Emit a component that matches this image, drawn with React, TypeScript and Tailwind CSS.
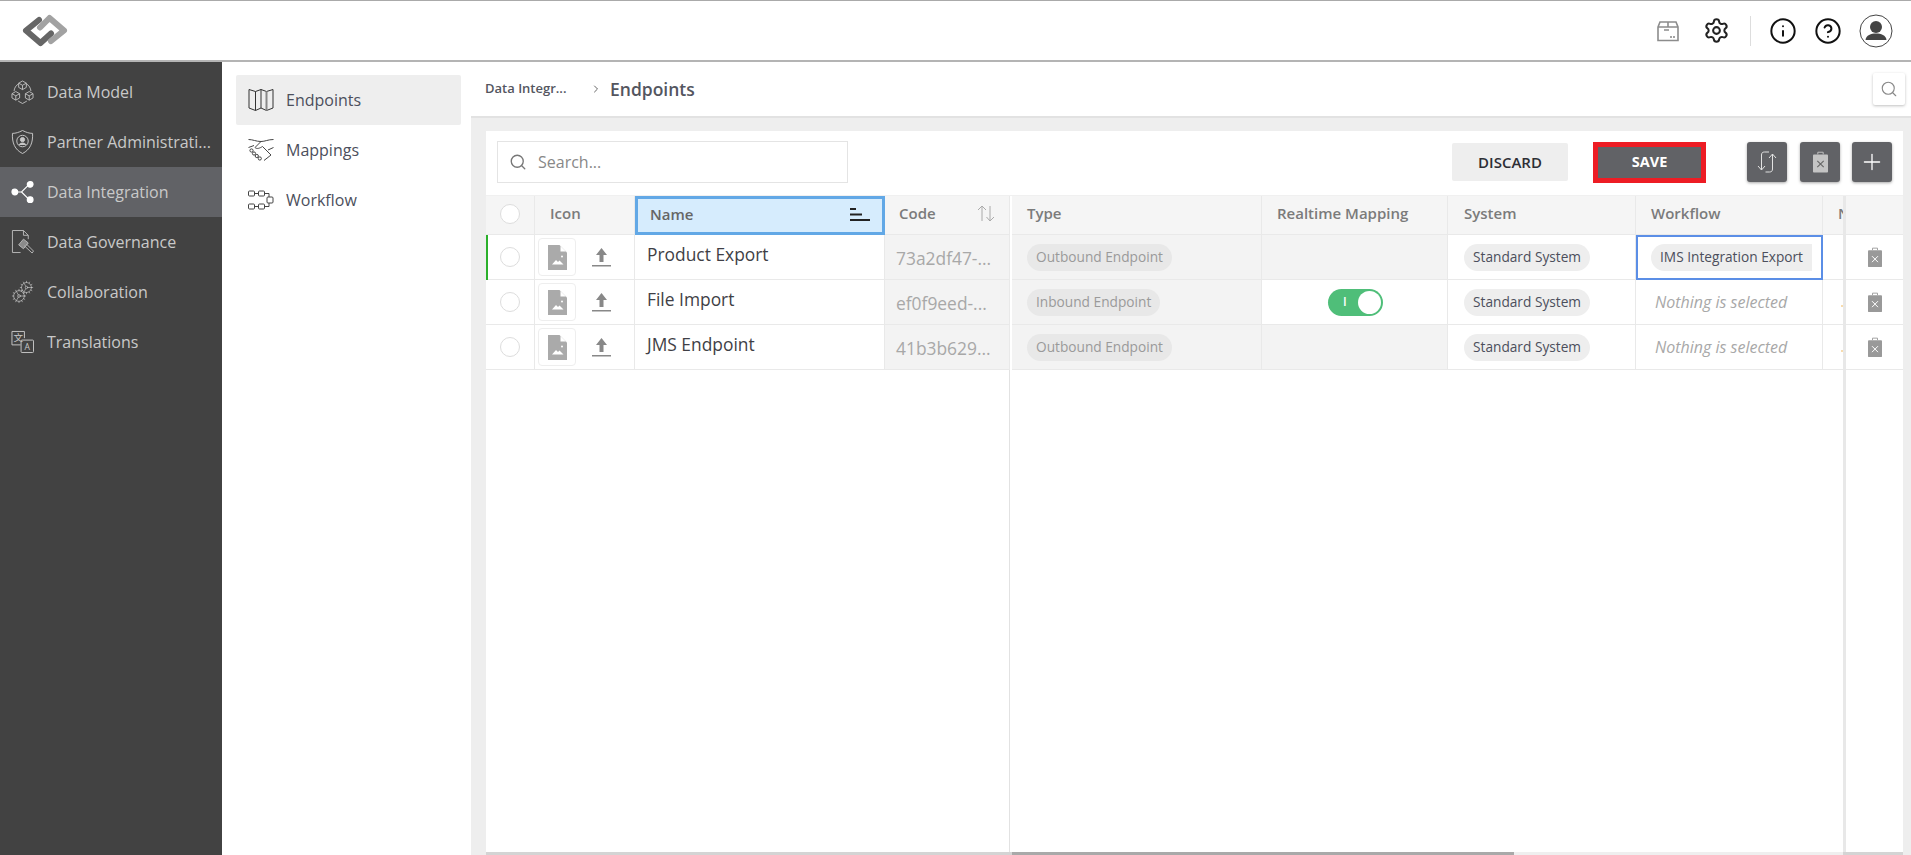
import { ReactNode } from "react"
import { Cog, Info, CircleHelp, Search, Settings, Plus, ChevronRight } from "lucide-react"

function Logo() {
  return (
    <svg width="46" height="33" viewBox="0 0 46 33" fill="none" strokeWidth="6" strokeLinejoin="round" strokeLinecap="round">
      <path d="M17 6 L4 16.5 L18.5 29 L29 19.5" stroke="#666" />
      <path d="M29 27 L42 16.5 L27.5 4 L18 13.5" stroke="#a2a2a2" />
    </svg>
  )
}

function CubesIcon() {
  const cube = (x: number, y: number) => (
    <g key={`${x}-${y}`} transform={`translate(${x} ${y})`}>
      <path d="M0 -4.5 L4 -2.2 V2.2 L0 4.5 L-4 2.2 V-2.2 Z M-4 -2.2 L0 0 L4 -2.2 M0 0 V4.5" />
    </g>
  )
  return (
    <svg width="24" height="26" viewBox="0 0 24 26" fill="none" stroke="#c8c8c8" strokeWidth="0.9">
      {cube(12, 6)}
      {cube(5, 17)}
      {cube(19, 17)}
      <path d="M8 4.5 C5 6 3.5 9 3.2 12 M16 4.5 C19 6 20.5 9 20.8 12 M7.5 22.5 L12 25 L16.5 22.5" />
    </svg>
  )
}

function ShieldIcon() {
  return (
    <svg width="24" height="26" viewBox="0 0 24 26" fill="none" stroke="#c8c8c8" strokeWidth="1">
      <path d="M12 1 C8 3 5 4 1.5 4 C1 14 4 21 12 25 C20 21 23 14 22.5 4 C19 4 16 3 12 1 Z" />
      <circle cx="12" cy="12" r="6" />
      <circle cx="12" cy="10.5" r="2.2" fill="#c8c8c8" />
      <path d="M8.5 16 C9 13.5 15 13.5 15.5 16" fill="#c8c8c8" />
    </svg>
  )
}

function ShareIcon() {
  return (
    <svg width="24" height="24" viewBox="0 0 24 24" fill="#fff" stroke="#fff" strokeWidth="1.2">
      <path d="M4 12 H11 L19 4 M11 12 L19 20" fill="none" />
      <circle cx="4" cy="12" r="3" />
      <circle cx="20" cy="4" r="3" />
      <circle cx="20" cy="20" r="3" />
    </svg>
  )
}

function GavelDocIcon() {
  return (
    <svg width="24" height="26" viewBox="0 0 24 26" fill="none" stroke="#b8b8b8" strokeWidth="1">
      <path d="M10 24 H1.5 V1 H13 L18 6 V10 M13 1 V6 H18" />
      <path d="M8 16 L13 10 L18 14 L13 20 Z" fill="#8a8a8a" />
      <path d="M14 17 L22 24.5 L23.5 22.5 L16 15" />
    </svg>
  )
}

function GearsIcon() {
  return (
    <span className="relative block h-[24px] w-[24px]">
      <Cog size={15} strokeWidth={1} color="#c8c8c8" className="absolute right-0 top-0" />
      <Cog size={16} strokeWidth={1} color="#c8c8c8" className="absolute bottom-0 left-0" />
    </span>
  )
}

function TranslateIcon() {
  return (
    <svg width="24" height="24" viewBox="0 0 24 24" fill="none" stroke="#c8c8c8" strokeWidth="1">
      <path d="M10 15 H1 V1 H14 V8" />
      <rect x="10.5" y="10" width="13" height="13" rx="1" />
      <text x="7.5" y="11" fontSize="10" textAnchor="middle" fill="#c8c8c8" stroke="none" fontFamily="Noto Sans CJK SC">文</text>
      <text x="17" y="20.5" fontSize="9" textAnchor="middle" fill="#c8c8c8" stroke="none" fontFamily="Open Sans">A</text>
    </svg>
  )
}

function MapIcon() {
  return (
    <svg width="26" height="24" viewBox="0 0 26 24" fill="none" stroke="#333" strokeWidth="1">
      <path d="M1 1.5 L7.5 3.5 L13 1.5 L18.5 3.5 L25 1.5 V20 L18.5 22.5 L13 20 L7.5 22.5 L1 20 Z" />
      <path d="M7.5 3.5 V22.5 M13 1.5 V20" />
      <path d="M18.5 3.5 V22.5" stroke="#888" strokeWidth="2" />
    </svg>
  )
}

function ShakeIcon() {
  return (
    <svg width="26" height="24" viewBox="0 0 26 24" fill="none" stroke="#444" strokeWidth="1">
      <path d="M0.5 1.5 C5 1.5 8 3.5 13 3.5 C17 3.5 20 1.5 25.5 1.5" />
      <path d="M13 3.5 L7 9.5 C9 11.5 12 10 14.5 8.5 L23 17 L16 22.5" />
      <path d="M0.5 9.5 L6 7.5 M25.5 9.5 L20 12" />
      <circle cx="3.5" cy="12.5" r="1.6" />
      <circle cx="6" cy="15.5" r="1.6" />
      <circle cx="8.8" cy="18" r="1.6" />
      <circle cx="11.8" cy="20.5" r="1.6" />
    </svg>
  )
}

function WorkflowIcon() {
  return (
    <svg width="26" height="20" viewBox="0 0 26 20" fill="none" stroke="#444" strokeWidth="1">
      <rect x="0.5" y="1" width="6" height="5" rx="1" />
      <rect x="10.5" y="1" width="6" height="5" rx="1" />
      <rect x="0.5" y="14" width="6" height="5" rx="1" />
      <rect x="10.5" y="14" width="6" height="5" rx="1" />
      <path d="M6.5 3.5 H10.5 M6.5 16.5 H10.5 M16.5 3.5 H21 V7 M21 13 V16.5 H16.5" />
      <rect x="19" y="7" width="6" height="6" rx="1" />
    </svg>
  )
}

function ArchiveIcon() {
  return (
    <svg width="22" height="22" viewBox="0 0 22 22" fill="none" stroke="#8c8c8c" strokeWidth="1.6">
      <path d="M1 7 L3 2 H19 L21 7 V20.5 H1 Z M1 7 H21" />
      <path d="M11 2 V7 M7 10 H12" />
      <path d="M14 16 V18 M17 16 V18" />
    </svg>
  )
}

function UserIcon() {
  return (
    <svg width="34" height="34" viewBox="0 0 34 34" fill="none">
      <circle cx="17" cy="17" r="16" stroke="#444" strokeWidth="1" />
      <circle cx="17" cy="13" r="6" fill="#444" />
      <path d="M6.5 26 C7 21 12 19.5 17 19.5 C22 19.5 27 21 27.5 26 Z" fill="#444" />
    </svg>
  )
}

function RefreshIcon() {
  return (
    <svg width="20" height="24" viewBox="0 0 20 24" fill="none" stroke="#e2e2e2" strokeWidth="1">
      <path d="M1 16 L4.5 20 L8 16 M4.5 20 V5 C4.5 3 5.5 2 7.5 2 H12" />
      <path d="M12 8 L15.5 4 L19 8 M15.5 4 V19 C15.5 21 14.5 22 12.5 22 H8.5" />
    </svg>
  )
}

function TrashIcon({ fill, mark, size = 14 }: { fill: string; mark: string; size?: number }) {
  return (
    <svg width={size} height={size * 1.45} viewBox="0 0 14 20">
      <path d="M4.5 3 V1 H9.5 V3" fill="none" stroke={fill} strokeWidth="0.9" />
      <path d="M1 3 H13 C13.5 3 14 3.5 14 4 V19 C14 19.5 13.5 20 13 20 H1 C0.5 20 0 19.5 0 19 V4 C0 3.5 0.5 3 1 3 Z" fill={fill} />
      <path d="M4 9 L10 15 M10 9 L4 15" stroke={mark} strokeWidth="1" />
    </svg>
  )
}

function FileImageIcon() {
  return (
    <svg width="19" height="25" viewBox="0 0 19 25">
      <path d="M0 0 H11.5 L19 7.5 V25 H0 Z" fill="#aaa" />
      <path d="M12.5 1 L18 6.5 H12.5 Z" fill="#fff" />
      <path d="M4 19.5 L8 15 L10 17 L11.5 15.5 L15.5 19.5 Z" fill="#fff" />
      <circle cx="14" cy="11.5" r="1" fill="#fff" />
    </svg>
  )
}

function UploadIcon() {
  return (
    <svg width="19" height="20" viewBox="0 0 19 20">
      <path d="M9.5 1 L15 8 H11.5 V15 H7.5 V8 H4 Z" fill="#888" />
      <rect x="0" y="18" width="19" height="1.5" fill="#888" />
    </svg>
  )
}

function SortedIcon() {
  return (
    <svg width="20" height="14" viewBox="0 0 20 14" fill="#222">
      <rect x="0" y="0" width="6" height="2" />
      <rect x="0" y="5.5" width="12" height="2" />
      <rect x="0" y="11" width="20" height="2" />
    </svg>
  )
}

function UnsortedIcon() {
  return (
    <svg width="18" height="17" viewBox="0 0 18 17" fill="none" stroke="#aaa" strokeWidth="1">
      <path d="M5 16 V1 M1 5 L5 1 L9 5" />
      <path d="M13 1 V16 M9.5 12 L13 16 L17 12" />
    </svg>
  )
}

function Circle() {
  return <span className="block h-[20px] w-[20px] rounded-full border border-[#ddd] bg-white" />
}

function SideItem({ icon, label, active }: { icon: ReactNode; label: string; active?: boolean }) {
  return (
    <div className={`flex h-[50px] items-center gap-[13px] pl-[11px] ${active ? "bg-[#616266]" : ""}`}>
      <span className="flex w-[23px] shrink-0 items-center justify-center">{icon}</span>
      <span className="truncate text-base text-[#c9c9c9]">{label}</span>
    </div>
  )
}

function SubItem({ icon, label, active }: { icon: ReactNode; label: string; active?: boolean }) {
  return (
    <div className={`flex h-[50px] items-center gap-[12px] rounded-[2px] pl-[12px] ${active ? "bg-[#eeeeee]" : ""}`}>
      <span className="flex w-[26px] shrink-0 items-center justify-center">{icon}</span>
      <span className="text-base text-[#4c4f5c]">{label}</span>
    </div>
  )
}

function HeadCell({ className = "", children }: { className?: string; children?: ReactNode }) {
  return (
    <div className={`flex h-[39px] shrink-0 items-center overflow-hidden whitespace-nowrap border-b border-r border-[#e9e9e9] bg-[#f5f5f5] pb-[3px] text-[15px] font-semibold text-[#7b7b7b] ${className}`}>
      {children}
    </div>
  )
}

function Cell({ className = "", children }: { className?: string; children?: ReactNode }) {
  return (
    <div className={`flex h-[45px] shrink-0 items-center border-b border-r border-[#e9e9e9] ${className}`}>
      {children}
    </div>
  )
}

function Pill({ label, muted }: { label: string; muted?: boolean }) {
  return (
    <span className={`flex h-[27px] items-center rounded-full px-[9px] text-[13.7px] ${muted ? "bg-[#e8e8e8] text-[#9a9a9a]" : "bg-[#eeeeee] text-[#4c4f5c]"}`}>
      {label}
    </span>
  )
}

const rows = [
  { name: "Product Export", code: "73a2df47-...", type: "Outbound Endpoint" },
  { name: "File Import", code: "ef0f9eed-...", type: "Inbound Endpoint", toggle: true },
  { name: "JMS Endpoint", code: "41b3b629...", type: "Outbound Endpoint" },
]

export default function App() {
  return (
    <div className="flex h-[855px] w-full flex-col overflow-hidden bg-white font-['Open_Sans',sans-serif]">
      <header className="flex h-[62px] shrink-0 items-center justify-between border-b-2 border-t border-b-[#b4b4b4] border-t-[#aaaaaa] pl-[22px] pr-[18px]">
        <Logo />
        <div className="flex items-center">
          <ArchiveIcon />
          <Settings size={27} strokeWidth={1.8} color="#222" className="ml-[24px]" />
          <span className="ml-[20px] h-[30px] w-px bg-[#ddd]" />
          <Info size={28} strokeWidth={1.7} color="#111" className="ml-[18px]" />
          <CircleHelp size={28} strokeWidth={1.7} color="#111" className="ml-[17px]" />
          <span className="ml-[17px]"><UserIcon /></span>
        </div>
      </header>

      <div className="flex min-h-0 flex-1">
        <aside className="w-[222px] shrink-0 bg-[#424242] pt-[5px]">
          <SideItem icon={<CubesIcon />} label="Data Model" />
          <SideItem icon={<ShieldIcon />} label="Partner Administrati..." />
          <SideItem icon={<ShareIcon />} label="Data Integration" active />
          <SideItem icon={<GavelDocIcon />} label="Data Governance" />
          <SideItem icon={<GearsIcon />} label="Collaboration" />
          <SideItem icon={<TranslateIcon />} label="Translations" />
        </aside>

        <nav className="w-[249px] shrink-0 pl-[14px] pr-[10px] pt-[13px]">
          <SubItem icon={<MapIcon />} label="Endpoints" active />
          <SubItem icon={<ShakeIcon />} label="Mappings" />
          <SubItem icon={<WorkflowIcon />} label="Workflow" />
        </nav>

        <main className="flex min-w-0 flex-1 flex-col bg-[#eeeeee]">
          <div className="relative flex h-[56px] shrink-0 items-center border-b-2 border-[#e2e2e2] bg-white pl-[14px]">
            <span className="w-[91px] text-[13px] font-semibold text-[#54565f]">Data Integr...</span>
            <ChevronRight size={12} color="#666" className="ml-[14px]" />
            <span className="ml-[8px] text-[17.5px] font-semibold text-[#54565f]">Endpoints</span>
            <span className="absolute right-[6px] top-[11px] flex h-[32px] w-[32px] items-center justify-center rounded-[2px] bg-white shadow-[0_1px_3px_rgba(0,0,0,0.25)]">
              <Search size={18} strokeWidth={1.5} color="#888" />
            </span>
          </div>

          <div className="ml-[15px] mr-[8px] mt-[13px] flex min-h-0 flex-1 flex-col bg-white">
            <div className="flex h-[64px] shrink-0 items-center pb-[2px] pl-[11px] pr-[11px]">
              <div className="flex h-[42px] w-[351px] items-center gap-[11px] border border-[#e4e4e4] pl-[11px] text-base text-[#888]">
                <Search size={18} strokeWidth={1.8} color="#777" />
                <span>Search...</span>
              </div>
              <button className="ml-auto h-[38px] w-[116px] rounded-[2px] bg-[#eeeeee] text-[15px] font-semibold text-[#2e2e35]">DISCARD</button>
              <button className="ml-[25px] h-[41px] w-[113px] border-[5px] border-[#ed1c24] bg-[#616266] text-[14.5px] font-bold text-white">SAVE</button>
              <button className="ml-[41px] flex h-[40px] w-[40px] items-center justify-center rounded-[3px] bg-[#616266] shadow-[0_1px_3px_rgba(0,0,0,0.35)]"><RefreshIcon /></button>
              <button className="ml-[13px] flex h-[40px] w-[40px] items-center justify-center rounded-[3px] bg-[#616266] shadow-[0_1px_3px_rgba(0,0,0,0.35)]"><TrashIcon fill="#c4c4c4" mark="#666" size={15} /></button>
              <button className="ml-[12px] flex h-[40px] w-[40px] items-center justify-center rounded-[3px] bg-[#616266] shadow-[0_1px_3px_rgba(0,0,0,0.35)]"><Plus size={26} strokeWidth={1.2} color="#fff" /></button>
            </div>

            <div className="flex min-h-0 flex-1 border-t border-[#f0f0f0]">
              <div className="flex w-[524px] shrink-0 flex-col border-r border-[#e2e2e2]">
                <div className="flex">
                  <HeadCell className="w-[49px] justify-center pb-0"><Circle /></HeadCell>
                  <HeadCell className="w-[100px] pl-[15px]">Icon</HeadCell>
                  <div className="flex h-[39px] w-[250px] shrink-0 items-center justify-between border-[3px] border-[#62a8e6] bg-[#d6ecfd] pb-[2px] pl-[12px] pr-[12px] text-[15px] font-semibold text-[#666]">
                    Name
                    <SortedIcon />
                  </div>
                  <HeadCell className="w-[125px] justify-between pl-[14px] pr-[14px]">Code<UnsortedIcon /></HeadCell>
                </div>
                {rows.map((r, i) => (
                  <div key={r.name} className="relative flex">
                    {i === 0 && <span className="absolute bottom-0 left-0 top-0 w-[2px] bg-[#2ab02a]" />}
                    <Cell className="w-[49px] justify-center"><Circle /></Cell>
                    <Cell className="w-[100px] pl-[3px]">
                      <span className="flex h-[38px] w-[38px] items-center justify-center rounded-[4px] border border-[#eeeeee]"><FileImageIcon /></span>
                      <span className="ml-[16px]"><UploadIcon /></span>
                    </Cell>
                    <Cell className="w-[250px] pb-[6px] pl-[12px] text-[17.4px] text-[#3f3f46]">{r.name}</Cell>
                    <Cell className="w-[125px] bg-[#f3f3f3] pl-[11px] pt-[3px] text-[17.4px] text-[#a8a8a8]">{r.code}</Cell>
                  </div>
                ))}
              </div>

              <div className="ml-[2px] flex w-[834px] shrink-0 flex-col overflow-hidden border-r-[3px] border-[#e8e8e8]">
                <div className="flex">
                  <HeadCell className="w-[250px] pl-[15px]">Type</HeadCell>
                  <HeadCell className="w-[186px] pl-[15px]">Realtime Mapping</HeadCell>
                  <HeadCell className="w-[188px] pl-[16px]">System</HeadCell>
                  <HeadCell className="w-[187px] pl-[15px]">Workflow</HeadCell>
                  <HeadCell className="w-[120px] pl-[15px]">Next</HeadCell>
                </div>
                {rows.map((r, i) => (
                  <div key={r.name} className="flex">
                    <Cell className="w-[250px] bg-[#f3f3f3] pl-[15px]"><Pill label={r.type} muted /></Cell>
                    <Cell className={`w-[186px] justify-center ${r.toggle ? "" : "bg-[#f3f3f3]"}`}>
                      {r.toggle && (
                        <span className="relative ml-[2px] flex h-[27px] w-[55px] items-center rounded-full bg-[#4fbe79] pl-[15px] text-xs font-semibold text-white">
                          I
                          <span className="absolute right-[2px] top-[2px] h-[23px] w-[23px] rounded-full bg-white" />
                        </span>
                      )}
                    </Cell>
                    <Cell className="w-[188px] pl-[16px]"><Pill label="Standard System" /></Cell>
                    {i === 0 ? (
                      <div className="flex h-[45px] w-[187px] shrink-0 items-center border-2 border-[#5b8ee6] pl-[13px]">
                        <span className="flex h-[27px] w-[161px] items-center whitespace-nowrap rounded-l-full bg-[#eeeeee] pl-[9px] text-[13.7px] text-[#4c4f5c]">IMS Integration Export</span>
                      </div>
                    ) : (
                      <Cell className="w-[187px] pl-[19px] text-base italic text-[#a8a8a8]">Nothing is selected</Cell>
                    )}
                    <Cell className="w-[120px]">
                      {i > 0 && <span className="ml-[18px] mt-[8px] h-[2px] w-[3px] bg-[#f8dcae]" />}
                    </Cell>
                  </div>
                ))}
              </div>

              <div className="flex min-w-0 flex-1 flex-col">
                <div className="h-[39px] shrink-0 border-b border-[#e9e9e9] bg-[#f5f5f5]" />
                {rows.map((r) => (
                  <div key={r.name} className="flex h-[45px] shrink-0 items-center justify-center border-b border-[#e9e9e9]">
                    <TrashIcon fill="#999" mark="#fff" />
                  </div>
                ))}
              </div>
            </div>

            <div className="flex h-[3px] shrink-0 bg-[#d4d4d4]">
              <span className="w-[526px] shrink-0" />
              <span className="h-full w-[502px] shrink-0 bg-[#a9a9a9]" />
              <span className="w-[329px] shrink-0 bg-[#efefef]" />
            </div>
          </div>
        </main>
      </div>
    </div>
  )
}
